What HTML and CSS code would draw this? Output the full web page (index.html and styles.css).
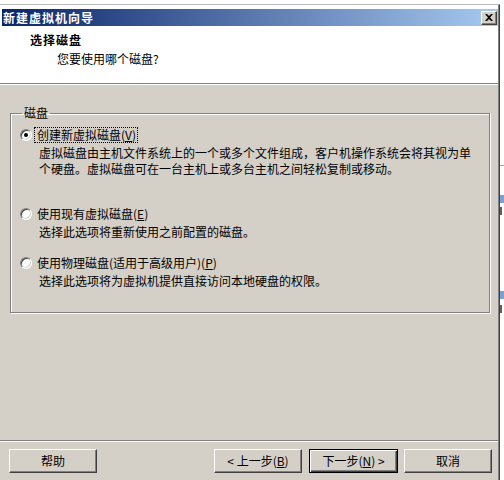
FILE: index.html
```html
<!DOCTYPE html>
<html lang="zh-CN">
<head>
<meta charset="utf-8">
<title>新建虚拟机向导</title>
<link rel="stylesheet" href="styles.css">
</head>
<body>
<div class="desk">
  <div class="window">
    <div class="window-inner">
      <div class="titlebar">
        <span class="title">新建虚拟机向导</span>
        <span class="close"><svg width="8" height="7" viewBox="0 0 8 7"><path d="M0 0h2l2 2 2-2h2L5 3.5 8 7H6L4 5 2 7H0l3-3.5z" fill="#000"/></svg></span>
      </div>
      <div class="header">
        <div class="h-title">选择磁盘</div>
        <div class="h-sub">您要使用哪个磁盘?</div>
      </div>
      <div class="main">
        <fieldset class="group">
          <legend>磁盘</legend>
          <div class="option">
            <div class="opt-row"><span class="radio checked"></span><span class="label focus">创建新虚拟磁盘(<span class="u">V</span>)</span></div>
            <div class="desc">虚拟磁盘由主机文件系统上的一个或多个文件组成，客户机操作系统会将其视为单<br>个硬盘。虚拟磁盘可在一台主机上或多台主机之间轻松复制或移动。</div>
          </div>
          <div class="option opt2">
            <div class="opt-row"><span class="radio"></span><span class="label">使用现有虚拟磁盘(<span class="u">E</span>)</span></div>
            <div class="desc">选择此选项将重新使用之前配置的磁盘。</div>
          </div>
          <div class="option opt3">
            <div class="opt-row"><span class="radio"></span><span class="label">使用物理磁盘(适用于高级用户)(<span class="u">P</span>)</span></div>
            <div class="desc">选择此选项将为虚拟机提供直接访问本地硬盘的权限。</div>
          </div>
        </fieldset>
        <div class="spacer"></div>
        <div class="footer">
          <div class="footer-inner">
            <button class="btn help">帮助</button>
            <button class="btn back">&lt; 上一步(<span class="u">B</span>)</button>
            <button class="btn next default">下一步(<span class="u">N</span>) &gt;</button>
            <button class="btn cancel">取消</button>
          </div>
        </div>
      </div>
    </div>
  </div>
  <div class="edge">
    <div class="bit line"></div>
    <div class="bit blue"></div>
    <div class="bit dark"></div>
    <div class="bit blue b2"></div>
    <div class="bit dark d2"></div>
  </div>
</div>
</body>
</html>
```

FILE: styles.css
```css
* { box-sizing: border-box; }
html, body { margin: 0; padding: 0; }
body {
  font-family: "Noto Sans CJK SC", "DejaVu Sans", sans-serif;
  font-size: 12px;
  color: #000;
  background: #fff;
}
.desk {
  display: flex;
  width: 504px;
  height: 480px;
  overflow: hidden;
  background: #fff;
}
.window {
  width: 500px;
  height: 476px;
  margin-top: 4px;
  border-top: 1px solid #b8b8b8;
  border-right: 1px solid #404040;
  background: #fff;
  flex: none;
}
.window-inner {
  height: 100%;
  border-right: 1px solid #808080;
  padding-top: 4px;
  display: flex;
  flex-direction: column;
}
.titlebar {
  height: 17px;
  margin-left: 2px;
  background: linear-gradient(to right, #0a246a, #a6caf0);
  display: flex;
  align-items: center;
  justify-content: space-between;
  padding: 0 1px 0 1px;
}
.title {
  color: #fff;
  font-weight: bold;
  font-size: 12px;
  letter-spacing: 1px;
  line-height: 17px;
}
.close {
  width: 16px;
  height: 14px;
  background: #d4d0c8;
  border: 1px solid;
  border-color: #fff #404040 #404040 #fff;
  box-shadow: inset -1px -1px 0 #808080;
  display: flex;
  align-items: center;
  justify-content: center;
  padding: 0 1px 1px 0;
}
.close svg { display: block; }
.header {
  height: 58px;
  background: #fff;
  border-bottom: 1px solid #808080;
  box-shadow: 0 1px 0 #fff;
  padding-top: 6px;
}
.h-title {
  padding-left: 30px;
  font-weight: bold;
  font-size: 12px;
  letter-spacing: 1px;
  line-height: 16px;
}
.h-sub {
  padding-left: 57px;
  margin-top: 3px;
  line-height: 16px;
}
.main {
  flex: 1;
  background: #d4d0c8;
  margin-top: 1px;
  display: flex;
  flex-direction: column;
  padding-top: 21px;
}
.group {
  margin: 0 8px 0 10px;
  padding: 7px 8px 23px 9px;
  min-width: 0;
  border: 1px solid #808080;
  box-shadow: 1px 1px 0 #fff, inset 1px 1px 0 #fff;
}
.group legend {
  padding: 0 2px;
  margin-left: 2px;
  line-height: 14px;
  font-size: 12px;
}
.opt-row {
  display: flex;
  align-items: center;
  height: 16px;
}
.radio {
  width: 12px;
  height: 12px;
  border-radius: 50%;
  background: #fff;
  border: 1px solid;
  border-color: #808080 #fff #fff #808080;
  box-shadow: inset 1px 1px 0 #404040, inset -1px -1px 0 #d4d0c8;
  margin-right: 2px;
  display: flex;
  align-items: center;
  justify-content: center;
  flex: none;
}
.radio.checked::after {
  content: "";
  width: 4px;
  height: 4px;
  border-radius: 50%;
  background: #000;
}
.label {
  border: 1px dotted transparent;
  padding: 0 1px 0 2px;
  line-height: 14px;
  white-space: nowrap;
}
.label.focus { border-color: #000; }
.u { text-decoration: underline; }
.desc {
  margin-left: 19px;
  margin-top: 2px;
  line-height: 16px;
  white-space: nowrap;
}
.opt2 { margin-top: 29px; }
.opt3 { margin-top: 15px; }
.spacer { flex: 1; }
.footer {
  border-top: 1px solid #808080;
}
.footer-inner {
  border-top: 1px solid #fff;
  display: flex;
  padding: 7px 6px 7px 9px;
}
.btn {
  height: 24px;
  width: 88px;
  font-family: inherit;
  font-size: 12px;
  line-height: 14px;
  color: #000;
  background: #d4d0c8;
  border: 1px solid;
  border-color: #fff #404040 #404040 #fff;
  box-shadow: inset -1px -1px 0 #808080;
  padding: 0;
  margin: 0;
  border-radius: 0;
}
.btn.help { margin-right: auto; }
.btn.next { width: 89px; margin-left: 7px; }
.btn.cancel { margin-left: 6px; }
.btn.default {
  border-color: #000;
  box-shadow: inset 1px 1px 0 #fff, inset -1px -1px 0 #404040, inset -2px -2px 0 #808080;
}
.edge {
  width: 4px;
  flex: none;
  display: flex;
  flex-direction: column;
  background: #fff;
}
.bit { width: 4px; flex: none; }
.line { height: 1px; background: #9aa6b8; margin-top: 165px; }
.blue { height: 8px; background: #7a9fd4; margin-top: 29px; }
.dark { height: 8px; background: #606060; margin-top: 4px; width: 2px; }
.b2 { margin-top: 76px; }
.d2 { margin-top: 6px; }
```
